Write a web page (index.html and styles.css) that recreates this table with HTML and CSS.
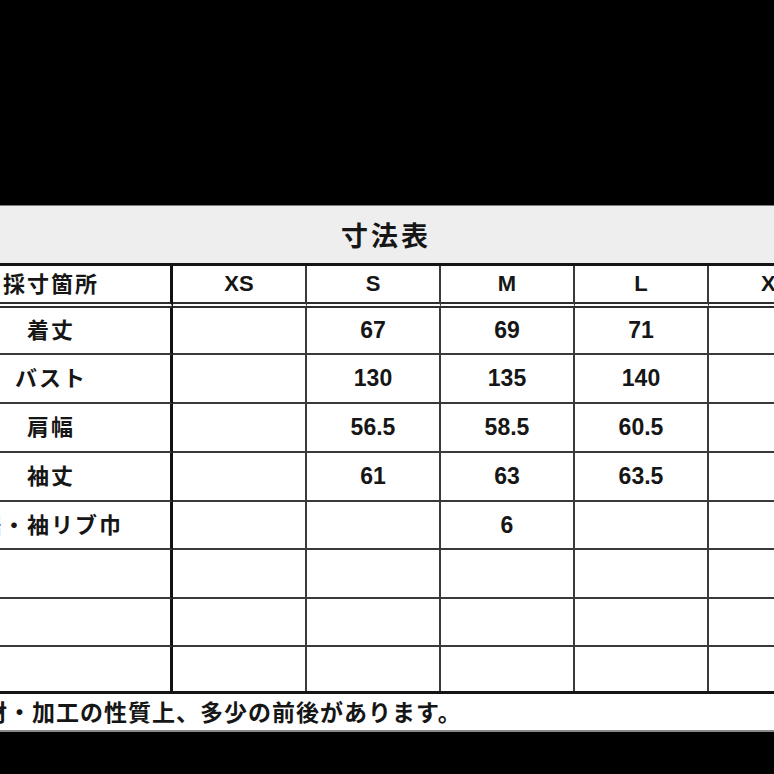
FILE: index.html
```html
<!DOCTYPE html>
<html lang="ja">
<head>
<meta charset="utf-8">
<title>寸法表</title>
<link rel="stylesheet" href="styles.css">
</head>
<body>
<div class="page">
  <div class="black-top"></div>
  <div class="sheet">
    <div class="title">寸法表</div>
    <div class="grid">
      <div class="cell head label">採寸箇所</div>
      <div class="cell head">XS</div>
      <div class="cell head">S</div>
      <div class="cell head">M</div>
      <div class="cell head">L</div>
      <div class="cell head">XL</div>

      <div class="cell label">着丈</div>
      <div class="cell"></div>
      <div class="cell">67</div>
      <div class="cell">69</div>
      <div class="cell">71</div>
      <div class="cell"></div>

      <div class="cell label">バスト</div>
      <div class="cell"></div>
      <div class="cell">130</div>
      <div class="cell">135</div>
      <div class="cell">140</div>
      <div class="cell"></div>

      <div class="cell label">肩幅</div>
      <div class="cell"></div>
      <div class="cell">56.5</div>
      <div class="cell">58.5</div>
      <div class="cell">60.5</div>
      <div class="cell"></div>

      <div class="cell label">袖丈</div>
      <div class="cell"></div>
      <div class="cell">61</div>
      <div class="cell">63</div>
      <div class="cell">63.5</div>
      <div class="cell"></div>

      <div class="cell label">裾・袖リブ巾</div>
      <div class="cell"></div>
      <div class="cell"></div>
      <div class="cell">6</div>
      <div class="cell"></div>
      <div class="cell"></div>

      <div class="cell label"></div>
      <div class="cell"></div>
      <div class="cell"></div>
      <div class="cell"></div>
      <div class="cell"></div>
      <div class="cell"></div>

      <div class="cell label"></div>
      <div class="cell"></div>
      <div class="cell"></div>
      <div class="cell"></div>
      <div class="cell"></div>
      <div class="cell"></div>

      <div class="cell label last"></div>
      <div class="cell last"></div>
      <div class="cell last"></div>
      <div class="cell last"></div>
      <div class="cell last"></div>
      <div class="cell last"></div>
    </div>
    <div class="note">※素材・加工の性質上、多少の前後があります。</div>
  </div>
</div>
</body>
</html>
```

FILE: styles.css
```css
html, body {
  margin: 0;
  padding: 0;
  background: #000;
  overflow: hidden;
  width: 774px;
  height: 774px;
}

.page {
  display: flex;
  flex-direction: column;
  font-family: "Liberation Sans", "Noto Sans CJK JP", sans-serif;
  font-weight: 700;
  color: #161616;
}

.black-top {
  height: 205px;
  background: #000;
  flex: none;
}

.sheet {
  flex: none;
  width: 915px;
  margin-left: -72px;
  background: #fff;
  border-top: 1px solid #7a7a7a;
  border-bottom: 2px solid #8a8a8a;
}

.title {
  height: 57px;
  background: #eeeeee;
  border-bottom: 3px solid #151515;
  box-sizing: content-box;
  display: flex;
  align-items: center;
  justify-content: center;
  font-family: "Noto Sans CJK JP", sans-serif;
  font-size: 27px;
  letter-spacing: 3px;
  padding-left: 1px;
  line-height: 1;
}

.grid {
  display: grid;
  grid-template-columns: 245px repeat(5, 134px);
  grid-template-rows: 42px 47px 49px 49px 49px 48px 49px 48px 44px;
  border-bottom: 3px solid #151515;
}

.cell {
  box-sizing: border-box;
  display: flex;
  align-items: center;
  justify-content: center;
  font-size: 23px;
  line-height: 1;
  border-right: 2px solid #3a3a3a;
  border-bottom: 2px solid #3a3a3a;
  background: #fff;
}

.cell.head {
  border-bottom: 6px double #2e2e2e;
  font-size: 22px;
}

.cell.label {
  border-right: 3px solid #111;
  font-family: "Noto Sans CJK JP", sans-serif;
  font-size: 22px;
  letter-spacing: 2px;
  padding-left: 4px;
  padding-bottom: 5px;
}

.cell.head.label {
  padding-bottom: 4px;
}

.cell.last {
  border-bottom: none;
}

.note {
  height: 36px;
  box-sizing: border-box;
  display: flex;
  align-items: center;
  padding-left: 8px;
  padding-bottom: 2px;
  font-family: "Noto Sans CJK JP", sans-serif;
  font-size: 23px;
  letter-spacing: 1px;
  line-height: 1;
  white-space: nowrap;
}
```
